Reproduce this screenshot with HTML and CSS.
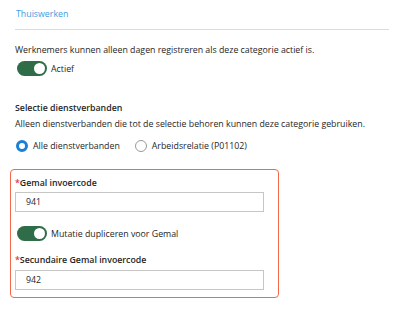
FILE: index.html
```html
<!DOCTYPE html>
<html lang="nl">
<head>
  <meta charset="UTF-8" />
  <title>Thuiswerken</title>
  <link rel="stylesheet" href="styles.css">
</head>
<body>

  <div class="page">
    <!-- Tab header -->
    <div class="tab-bar">
      <span class="tab">Thuiswerken</span>
    </div>

    <p class="text">Werknemers kunnen alleen dagen registreren als deze categorie actief is.</p>
    <label class="switch-row">
      <span class="switch on"><span class="knob"></span></span>
      <span>Actief</span>
    </label>

    <h4 class="section-title">Selectie dienstverbanden</h4>
    <p class="text">Alleen dienstverbanden die tot de selectie behoren kunnen deze categorie gebruiken.</p>
    <div class="radio-group">
      <label class="radio-row"><span class="radio checked"></span>Alle dienstverbanden</label>
      <label class="radio-row"><span class="radio"></span>Arbeidsrelatie (P01102)</label>
    </div>

    <!-- Gemal block -->
    <div class="highlight-box">
      <div class="field">
        <div class="field-label"><span class="req">*</span>Gemal invoercode</div>
        <div class="input">941</div>
      </div>
      <label class="switch-row">
        <span class="switch on"><span class="knob"></span></span>
        <span>Mutatie dupliceren voor Gemal</span>
      </label>
      <div class="field">
        <div class="field-label"><span class="req">*</span>Secundaire Gemal invoercode</div>
        <div class="input second">942</div>
      </div>
    </div>
  </div>

</body>
</html>
```

FILE: styles.css
```css
body {
  margin: 0;
  font-family: 'Open Sans', sans-serif;
  font-size: 8.8px;
  line-height: 14px;
  color: #262626;
  background: #fff;
}

.page {
  padding: 0 11px 0 15px;
}

.tab-bar {
  height: 29px;
  border-bottom: 1px solid #dcdcdc;
}

.tab {
  display: block;
  padding: 7px 0 0 1px;
  color: #3d9be0;
}

.text {
  margin: 13px 0 0;
}

.switch-row {
  display: flex;
  align-items: center;
  gap: 4px;
  margin-top: 4px;
  padding-left: 2px;
}

.switch {
  width: 30px;
  height: 15px;
  border-radius: 8px;
  background: #ccc;
  position: relative;
}

.switch.on {
  background: #2f6d48;
}

.knob {
  position: absolute;
  top: 2px;
  right: 2px;
  width: 11px;
  height: 11px;
  border-radius: 50%;
  background: #fff;
}

.section-title {
  margin: 25px 0 0;
  font-size: 8.8px;
  font-weight: 600;
}

.section-title + .text {
  margin-top: 2px;
}

.radio-group {
  display: flex;
  gap: 14px;
  margin-top: 8px;
}

.radio-row {
  display: flex;
  align-items: center;
  gap: 5px;
  padding-left: 1px;
}

.radio {
  width: 12px;
  height: 12px;
  border-radius: 50%;
  border: 1px solid #999;
  box-sizing: border-box;
}

.radio.checked {
  border: 3.5px solid #1a7fd6;
  background: #fff;
}

.highlight-box {
  width: 269px;
  margin: 16px 0 0 -5px;
  padding: 6px 14px 7px 4px;
  border: 1px solid #f4684a;
  border-radius: 4px;
  box-sizing: border-box;
}

.field-label {
  font-weight: 600;
}

.req {
  color: #e0304a;
}

.input {
  margin-top: 2px;
  height: 20px;
  line-height: 18px;
  padding: 0 10px;
  border: 1px solid #c6c6c6;
  box-sizing: border-box;
}

.input.second {
  margin-top: 3px;
}

.highlight-box .switch-row {
  margin: 14px 0 12px;
}
```
